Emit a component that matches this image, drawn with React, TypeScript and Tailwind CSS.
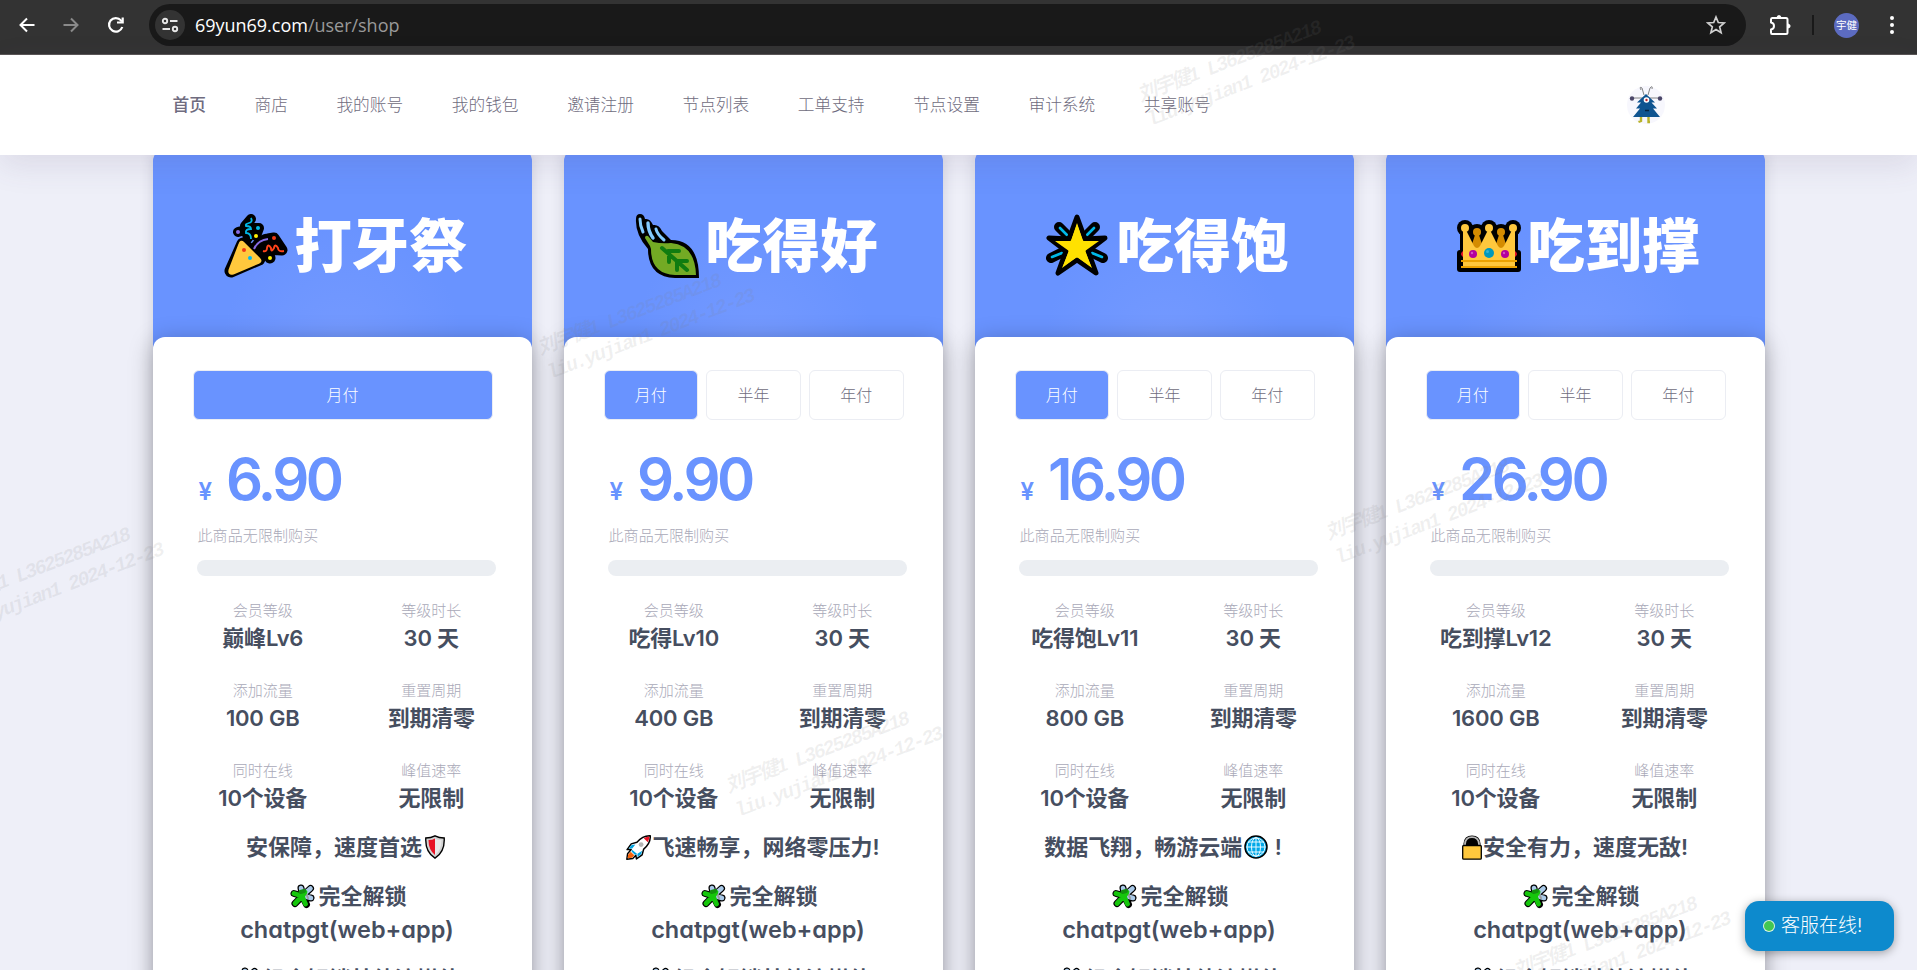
import type { ReactNode } from "react";

const cjk = "font-[Inter,'Noto_Sans_CJK_SC',sans-serif]";

function PopperEmoji() {
  return (
    <svg viewBox="0 0 64 64" className="h-16 w-16">
      <g stroke="#000" strokeLinecap="round" strokeLinejoin="round" fill="#000">
        <path d="M27 5 L21 12 L24 24 M14 18 L28 14 L35 14 L32 22" strokeWidth="10" />
        <path d="M31 34 Q37 26 44 25 L50 24 L58 36 L41 35 L46 44" strokeWidth="11" />
        <path d="M19 30 L35 45 L7 57 Z" strokeWidth="13" />
      </g>
      <path d="M19 29 L35 45 Q37 47 35 48 L9 59 Q5 60 6 56 L16 30 Q17 27 19 29Z" fill="#ffc83d" stroke="#ffc83d" strokeWidth="3" strokeLinejoin="round" />
      <path d="M27 4 q2 4 -2 5 q-4 1 -3 3 q5 0 5 3 q-6 0 -5 4 q5 0 5 6" fill="none" stroke="#00b9e8" strokeWidth="1.8" />
      <path d="M39 37 q4 1 4 -3 q1 -5 4 0 q0 5 3 0 q1 -5 4 0 q0 4 6 3" fill="none" stroke="#ff4319" strokeWidth="1.9" />
      <path d="M30 35 Q34 26 44 25" fill="none" stroke="#886ce4" strokeWidth="2" />
      <circle cx="14" cy="18" r="2" fill="#886ce4" />
      <circle cx="34" cy="14" r="2" fill="#00b9e8" />
      <circle cx="32" cy="22" r="2" fill="#fff100" />
      <circle cx="50" cy="24" r="2" fill="#f03a17" />
      <circle cx="46" cy="44" r="2" fill="#fff100" />
      <circle cx="20" cy="36" r="2" fill="#f03a17" />
      <circle cx="26" cy="44" r="2" fill="#00b9f2" />
    </svg>
  );
}

function LeafEmoji() {
  return (
    <svg viewBox="0 0 64 64" className="h-16 w-16">
      <path d="M5 0 Q9 0 10 5 Q15 4 18 11 Q24 10 27 17 L36 26 Q64 26 64 64 L40 64 Q13 63 13 35 Q0 20 1 5 Q1 0 5 0Z" fill="#000" />
      <path d="M10 24 Q10 21 13 22 L18 28 Q27 30 36 29 Q60 31 61 61 L40 61 Q16 60 16 35 L15 32Z" fill="#73aa24" />
      <g fill="none" stroke="#83cbff" strokeWidth="3" strokeLinecap="round">
        <path d="M5 5 Q5 12 8 18" />
        <path d="M13 9 Q13 17 18 24" strokeWidth="3.4" />
        <path d="M21 15 Q22 20 29 26" />
      </g>
      <path d="M27 34 L52 56 M33 37 H44 M34 39 V48 M42 47 H52 M42 48 V56" fill="none" stroke="#107c10" strokeWidth="4" strokeLinecap="round" />
    </svg>
  );
}

function StarEmoji() {
  return (
    <svg viewBox="0 0 64 64" className="h-16 w-16">
      <g strokeLinecap="round">
        <path d="M13 13 L20 20 M49 13 L42 20 M5 44 L15 39 M57 44 L47 39" stroke="#000" strokeWidth="10" />
        <path d="M14 14 L21 21 M48 14 L41 21 M6 43 L16 39 M56 43 L46 39" stroke="#00b9e8" strokeWidth="2.6" />
      </g>
      <path d="M31 3 L39 25 L59 24 L42 37 L50 59 L31 46 L12 59 L20 37 L3 24 L23 25Z" fill="#ffe100" stroke="#000" strokeWidth="5" strokeLinejoin="round" />
      <path d="M31 9 L37 27 L53 27 L39 37 L46 54 L31 43 L16 54 L23 37 L9 27 L25 27Z" fill="#ffe100" />
    </svg>
  );
}

function CrownEmoji() {
  return (
    <svg viewBox="0 0 64 64" className="h-16 w-16">
      <g transform="translate(0 6)">
        <path d="M8 8 L20 12 L32 8 L44 12 L56 8 V47 H8Z" fill="#000" stroke="#000" strokeWidth="10" strokeLinejoin="round" />
        <g fill="#000">
          <circle cx="8" cy="8" r="8" /><circle cx="32" cy="8" r="8" /><circle cx="56" cy="8" r="8" />
          <circle cx="20" cy="12" r="8" /><circle cx="44" cy="12" r="8" />
          <rect x="0" y="30" width="64" height="22" rx="3" />
        </g>
        <g fill="#d48c00">
          <circle cx="20" cy="12" r="4" /><circle cx="44" cy="12" r="4" />
          <path d="M18 15 h4 L27 30 H13Z M42 15 h4 L51 30 H37Z" />
        </g>
        <g fill="#ffc83d">
          <circle cx="8" cy="8" r="4" /><circle cx="32" cy="8" r="4" /><circle cx="56" cy="8" r="4" />
          <path d="M6 10 H9 L17 26 Q20 30 23 26 L31 10 H33 L41 26 Q44 30 47 26 L55 10 H58 V47 H6Z" />
        </g>
        <path d="M4 41 H60 M4 47 H60" stroke="#eca301" strokeWidth="2" />
        <circle cx="16" cy="34" r="4" fill="#b4009e" /><circle cx="48" cy="34" r="4" fill="#b4009e" />
        <circle cx="32" cy="33" r="5" fill="#0099bc" />
        <circle cx="30.500" cy="31.500" r="1.500" fill="#31b5d4" />
        <circle cx="15" cy="33" r="1.200" fill="#d24fc4" /><circle cx="47" cy="33" r="1.200" fill="#d24fc4" />
        <path d="M6 31 Q2 34 6 37Z M58 31 Q62 34 58 37Z" fill="#e81224" />
      </g>
    </svg>
  );
}

function Shield() {
  return (
    <svg viewBox="0 0 20 24" className="ml-[3px] inline-block h-6 w-5 align-[-4px]">
      <path d="M10 .8 Q14 3 19.200 3 Q20 17 10 23.200 Q0 17 .8 3 Q6 3 10 .8Z" fill="#d2d2d2" stroke="#000" strokeWidth="1.400" />
      <path d="M10 3.500 V20 Q3.500 15 3.500 5 Q7.500 5 10 3.500Z" fill="#e81224" />
      <path d="M10 3.500 V20 Q16.500 15 16.500 5 Q12.500 5 10 3.500Z" fill="#e8e8e8" />
    </svg>
  );
}

function Rocket() {
  return (
    <svg viewBox="0 0 24 24" className="mr-[1px] inline-block h-[25px] w-[25px] align-[-5px]">
      <path d="M23.300 .7 Q16 .5 10.500 7 L5 8.500 L1 14 L5 14 L1.500 18 L.8 23.300 L6.500 22.500 L9.500 19.500 L10 23 L15.500 19 L17 13.500 Q23.700 8 23.300 .7Z" fill="#fff" stroke="#000" strokeWidth="1.400" strokeLinejoin="round" />
      <path d="M22.500 1.500 Q19.500 1.500 17 3 L21 7 Q22.500 4 22.500 1.500Z" fill="#e81224" />
      <path d="M9 9 L5.500 9.500 L2.500 13 L6 13Z M15.500 15 L14.500 18.500 L11 21 V18Z" fill="#00a3e0" />
      <path d="M5.500 14 L11 18.500 L8.500 19 L5.500 16Z" fill="#00a3e0" />
      <path d="M4.500 16 L2 19 L1.600 22.400 L5.800 21.800 L8 19.500Z" fill="#f7630c" />
      <circle cx="14.500" cy="9.200" r="2.300" fill="#b5b5b5" />
    </svg>
  );
}

function Globe() {
  return (
    <svg viewBox="0 0 24 24" className="mr-[1px] ml-[2px] inline-block h-6 w-6 align-[-4px]">
      <circle cx="12" cy="12" r="11" fill="#00a8e8" stroke="#000" strokeWidth="1.500" />
      <g fill="none" stroke="#e6f8ff" strokeWidth="1">
        <ellipse cx="12" cy="12" rx="4.500" ry="9.500" />
        <path d="M12 2.500 V21.500 M2.500 12 H21.500 M4 7 H20 M4 17 H20" />
        <circle cx="12" cy="12" r="9" />
      </g>
    </svg>
  );
}

function Lock() {
  return (
    <svg viewBox="0 0 20 25" className="mr-[1px] inline-block h-[25px] w-[20px] align-[-5px]">
      <path d="M1.500 11 V8.500 Q2 .5 10 .5 Q18 .5 18.500 8.500 V11Z" fill="#000" />
      <path d="M3 11 V9 Q3.500 2.200 10 2.200 Q16.500 2.200 17 9 V11" fill="none" stroke="#b8b8b8" strokeWidth="1.800" />
      <rect x=".7" y="10.500" width="18.600" height="13.700" rx="1" fill="#ffc83d" stroke="#000" strokeWidth="1.300" />
    </svg>
  );
}

function Puzzle() {
  return (
    <svg viewBox="0 0 25 25" className="mr-[3px] ml-[3px] inline-block h-[25px] w-[25px] align-[-5px]">
      <g fill="none" strokeLinecap="round" strokeLinejoin="round">
        <path d="M12.500 12 L11 4 M12.500 12 L20.500 4.500 M12.500 12 L21 14 M12.500 12 L16.500 20.500 M12.500 12 L5 19.500 M12.500 12 L4 9.500" stroke="#000" strokeWidth="7" />
        <path d="M12.500 10 L11 4 M13 11 L20.500 4.500 M14 12 L21 14" stroke="#a9c9e8" strokeWidth="4.600" />
        <path d="M16 9 L18 14" stroke="#9a9a9a" strokeWidth="2" />
        <path d="M12 12 L15.500 20 M12 12 L5 19.500 M12 12 L4 9.500 M12 13 L15 8" stroke="#16c60c" strokeWidth="4.800" />
        <path d="M10.500 8 L14 7" stroke="#13910d" strokeWidth="4" />
      </g>
    </svg>
  );
}

function SiteAvatar() {
  return (
    <svg viewBox="0 0 38 38" className="h-[38px] w-[38px]">
      <circle cx="19" cy="19" r="19" fill="#f7f7fd" />
      <path d="M17 9 L15 2 Q12 0 14 4 M21 9 L23 2 Q26 -1 25 3 M6 12 H32" fill="none" stroke="#666" strokeWidth=".8" />
      <circle cx="5" cy="12.500" r="2.200" fill="#4a4668" />
      <circle cx="33" cy="12.500" r="2.200" fill="#4a4668" />
      <path d="M19 8 L28 16.500 L24.500 16.500 L30 22.500 L26 22.500 L33 31 L6 31 L13 22.500 L9 22.500 L14 16.500 L10 16.500Z" fill="#0f5490" />
      <circle cx="19.500" cy="14" r="2.800" fill="#fff" />
      <circle cx="19.500" cy="14" r="1.200" fill="#c0242a" />
      <path d="M18 24.500 H22" stroke="#06233f" strokeWidth="1.500" />
      <path d="M14 31 V35 L11.500 36 M21.500 31 V36 L23 36" fill="none" stroke="#b9b32a" strokeWidth="2.400" />
    </svg>
  );
}

type Plan = {
  emoji: ReactNode;
  title: string;
  periods: string[];
  price: string;
  stats: [string, string][];
  feature: ReactNode;
};

function stats(level: string, traffic: string): [string, string][] {
  return [
    ["会员等级", level],
    ["等级时长", "30 天"],
    ["添加流量", traffic],
    ["重置周期", "到期清零"],
    ["同时在线", "10个设备"],
    ["峰值速率", "无限制"],
  ];
}

const plans: Plan[] = [
  {
    emoji: <PopperEmoji />,
    title: "打牙祭",
    periods: ["月付"],
    price: "6.90",
    stats: stats("巅峰Lv6", "100 GB"),
    feature: <span className="pl-[7px]">安保障，速度首选<Shield /></span>,
  },
  {
    emoji: <LeafEmoji />,
    title: "吃得好",
    periods: ["月付", "半年", "年付"],
    price: "9.90",
    stats: stats("吃得Lv10", "400 GB"),
    feature: <><Rocket />飞速畅享，网络零压力!</>,
  },
  {
    emoji: <StarEmoji />,
    title: "吃得饱",
    periods: ["月付", "半年", "年付"],
    price: "16.90",
    stats: stats("吃得饱Lv11", "800 GB"),
    feature: <span className="pr-[2px]">数据飞翔，畅游云端<Globe /> !</span>,
  },
  {
    emoji: <CrownEmoji />,
    title: "吃到撑",
    periods: ["月付", "半年", "年付"],
    price: "26.90",
    stats: stats("吃到撑Lv12", "1600 GB"),
    feature: <><Lock />安全有力，速度无敌!</>,
  },
];

const navItems = ["首页", "商店", "我的账号", "我的钱包", "邀请注册", "节点列表", "工单支持", "节点设置", "审计系统", "共享账号"];

function BrowserBar() {
  return (
    <div className="flex h-[55px] shrink-0 items-start border-b border-[#5a5656] bg-[#333333] pt-1">
      <div className="flex h-[42px] w-[149px] items-center pl-[17px] text-white">
        <svg viewBox="0 0 20 20" className="h-5 w-5" fill="none" stroke="#fff" strokeWidth="2">
          <path d="M17.500 10 H3.500 M10 3.500 L3.500 10 L10 16.500" />
        </svg>
        <svg viewBox="0 0 20 20" className="ml-6 h-5 w-5" fill="none" stroke="#8a8a8a" strokeWidth="2">
          <path d="M2.500 10 H16.500 M10 3.500 L16.500 10 L10 16.500" />
        </svg>
        <svg viewBox="0 0 20 20" className="ml-[25px] h-5 w-5" fill="none" stroke="#fff" strokeWidth="2.200">
          <path d="M16.300 12 A6.800 6.800 0 1 1 15 5.400 L16 6.500" />
          <path d="M16.700 2.500 V7.500 H11" />
        </svg>
      </div>
      <div className="flex h-[42px] w-[1597px] items-center rounded-full bg-[#191919] pr-5 pl-1.5">
        <div className="flex h-[30px] w-[30px] items-center justify-center rounded-full bg-[#333333]">
          <svg viewBox="0 0 18 16" className="h-4 w-[18px]" fill="none" stroke="#e8e8e8" strokeWidth="1.900">
            <circle cx="4" cy="4" r="2.200" />
            <path d="M9 4 H16.500 M1.500 12 H9" />
            <circle cx="14" cy="12" r="2.200" />
          </svg>
        </div>
        <div className="ml-2.5 flex-1 font-['Open_Sans','Noto_Sans',sans-serif] text-[18px] tracking-[-0.020px] text-white">
          69yun69.com<span className="text-[#999999]">/user/shop</span>
        </div>
        <svg viewBox="0 0 20 20" className="h-5 w-5" fill="none" stroke="#d0d0d0" strokeWidth="1.700">
          <path d="M10 2 L12.300 7.500 L18.200 8 L13.700 11.900 L15.100 17.700 L10 14.600 L4.900 17.700 L6.300 11.900 L1.800 8 L7.700 7.500Z" />
        </svg>
      </div>
      <div className="flex h-[42px] flex-1 items-center pl-[23px]">
        <svg viewBox="0 0 22 22" className="h-[22px] w-[22px]">
          <path d="M3 4 H17 Q18.500 4 18.500 5.500 V18.500 Q18.500 20 17 20 H3 Q2 20 2 18.500 V15.500 Q5 15 5 12 Q5 9 2 8.500 V5.500 Q2 4 3 4Z" fill="none" stroke="#fff" strokeWidth="2" strokeLinejoin="round" />
          <path d="M7.500 3.500 Q8 1 10 1 Q12 1 12.500 3.500Z M18.500 9.500 Q21.500 10 21.500 12 Q21.500 14 18.500 14.500Z" fill="#fff" />
        </svg>
        <div className="ml-[21px] h-5 w-[2px] bg-[#191919]" />
        <div className="ml-5 flex h-[25px] w-[25px] items-center justify-center rounded-full bg-[#5c6bc0] font-['Noto_Sans_CJK_SC',sans-serif] text-[10.500px] text-white">宇健</div>
        <div className="ml-[31px] flex flex-col gap-[3px]">
          <i className="h-1 w-1 rounded-full bg-white" />
          <i className="h-1 w-1 rounded-full bg-white" />
          <i className="h-1 w-1 rounded-full bg-white" />
        </div>
      </div>
    </div>
  );
}

function NavBar() {
  return (
    <nav className="relative z-10 flex h-[100px] shrink-0 items-center bg-white pl-[172.500px] shadow-[0_10px_30px_rgba(82,63,105,0.12)]">
      <div className="flex w-[1454px] items-center gap-[48.600px] pt-[2px] text-[16.700px] text-[#6f6c80]">
        {navItems.map((t, i) => (
          <a key={t} className={i === 0 ? "font-medium whitespace-nowrap" : "font-light whitespace-nowrap"}>{t}</a>
        ))}
      </div>
      <SiteAvatar />
    </nav>
  );
}

function PlanCard({ plan }: { plan: Plan }) {
  return (
    <section className="flex h-[860px] flex-col rounded-t-xl shadow-[0_0_14px_rgba(40,40,70,0.16)]">
      <header className="flex h-[200px] items-start justify-center rounded-t-xl bg-[#6993ff] bg-[radial-gradient(ellipse_at_50%_100%,#759aff_0%,#6993ff_45%)] pt-[63px]">
        <div className="flex items-center">
          <span className="mr-1.5 ml-[7px] flex">{plan.emoji}</span>
          <h2 className="text-[57.500px] leading-[68px] font-black text-white">{plan.title}</h2>
        </div>
      </header>
      <div className="relative -mt-3 flex-1 rounded-t-xl bg-white px-10 pt-[33px] shadow-[0_4px_24px_rgba(0,0,0,0.28)]">
        <div className="-mr-px flex gap-2">
          {plan.periods.map((p, i) => (
            <button
              key={p}
              className={
                i === 0
                  ? "h-[50px] flex-1 rounded-md border border-[#ebedf3] bg-[#6993ff] text-[16px] font-light text-white"
                  : "h-[50px] flex-1 rounded-md border border-[#ebedf3] text-[16px] font-light text-[#6f6c80]"
              }
            >
              {p}
            </button>
          ))}
        </div>
        <div className="mt-[22px] flex h-[74px] items-baseline pl-[6px] font-semibold text-[#6993ff]">
          <span className="mr-[14px] text-[24px]">¥</span>
          <span className="text-[58px] leading-[74px] tracking-[-3.500px]">{plan.price}</span>
        </div>
        <p className="mt-[9px] pl-[5px] text-[15px] leading-[22px] font-light tracking-[0.1px] text-[#a9a9b8]">此商品无限制购买</p>
        <div className="mt-[13px] ml-1 h-4 w-[299px] rounded-lg bg-[#ebeef2]" />
        <div className="-mr-[24px] ml-[-14px] grid grid-cols-2 pt-[23px]">
          {plan.stats.map(([label, value], i) => (
            <div key={i} className="flex h-[80px] flex-col items-center whitespace-nowrap">
              <span className="text-[15px] leading-[24px] font-light text-[#a9a9b8]">{label}</span>
              <span className="text-[22px] leading-[31px] font-semibold tracking-[-0.2px] text-[#464e5f]">{value}</span>
            </div>
          ))}
        </div>
        <div className="-mt-[8px] flex flex-col gap-4 text-center text-[22px] leading-[33px] font-semibold whitespace-nowrap text-[#464e5f]">
          <p>{plan.feature}</p>
          <p className="pl-2.5">
            <Puzzle />完全解锁
            <br />
            <span className="text-[23.500px]">chatpgt(web+app)</span>
          </p>
          <p className="pl-2"><Puzzle />组合解锁其他流媒体</p>
        </div>
      </div>
    </section>
  );
}

const marks = [
  "left-[1033px] top-[44px]",
  "left-[433px] top-[297px]",
  "left-[621px] top-[735px]",
  "left-[1221px] top-[482px]",
  "left-[1409px] top-[920px]",
  "left-[-158px] top-[551px]",
];

function Watermarks() {
  return (
    <div className="pointer-events-none absolute inset-0 z-30 overflow-hidden">
      {marks.map((m) => (
        <div
          key={m}
          className={`absolute w-[220px] translate-x-[103px] -rotate-[21deg] font-['Liberation_Mono','Noto_Sans_CJK_SC',monospace] text-[20px] leading-[26px] tracking-[-2px] whitespace-nowrap text-[#808080]/12 italic ${m}`}
        >
          <div className="font-bold">刘宇健1 L3625285A218</div>
          <div className="font-bold">liu.yujian1 2024-12-23</div>
        </div>
      ))}
    </div>
  );
}

export default function App() {
  return (
    <div className={`relative flex h-[970px] w-full flex-col overflow-hidden bg-[#eeeff8] ${cjk} [font-feature-settings:'cv11']`}>
      <BrowserBar />
      <NavBar />
      <main className="mx-auto -mt-1.5 grid w-[1612px] shrink-0 grid-cols-4 gap-8">
        {plans.map((p) => (
          <PlanCard key={p.title} plan={p} />
        ))}
      </main>
      <div className="absolute top-[901px] left-[1745px] z-20 flex h-[50px] w-[149px] items-center rounded-[14px] bg-[#0d8acd] pl-[18px] text-[19px] font-light text-white shadow-[0_2px_10px_rgba(0,0,0,0.35)]">
        <span className="mr-[6px] h-3 w-3 rounded-full border border-white/80 bg-[#43c753]" />
        客服在线!
      </div>
      <Watermarks />
    </div>
  );
}
